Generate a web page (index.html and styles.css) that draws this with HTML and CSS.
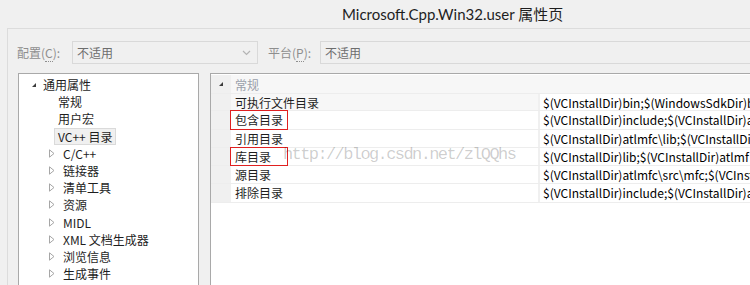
FILE: index.html
```html
<!DOCTYPE html>
<html lang="zh-CN">
<head>
    <meta charset="UTF-8">
    <title>Microsoft.Cpp.Win32.user 属性页</title>
    <link rel="stylesheet" href="styles.css">
</head>
<body>
    <div class="title">Microsoft.Cpp.Win32.user 属性页</div>

    <div class="dialog">
        <div class="config-row">
            <span class="config-label">配置(<u>C</u>):</span>
            <div class="combo combo-config">
                <span>不适用</span>
                <svg class="chevron" width="9" height="6" viewBox="0 0 9 6"><path d="M1 1 L4.5 4.5 L8 1" fill="none" stroke="#b4b4b4" stroke-width="1.2"/></svg>
            </div>
            <span class="config-label">平台(<u>P</u>):</span>
            <div class="combo combo-platform"><span>不适用</span></div>
        </div>

        <div class="panels">
            <div class="tree">
                <div class="tree-row">
                    <svg class="arrow-open" width="6" height="6" viewBox="0 0 6 6"><path d="M5 1 L5 5 L1 5 Z" fill="#3c3c3c"/></svg>
                    <span>通用属性</span>
                </div>
                <div class="tree-row child"><span>常规</span></div>
                <div class="tree-row child"><span>用户宏</span></div>
                <div class="tree-row child"><span class="selected">VC++ 目录</span></div>
                <div class="tree-row folded"><svg class="arrow-closed" width="6" height="9" viewBox="0 0 6 9"><path d="M0.5 0.8 L5 4.5 L0.5 8.2 Z" fill="none" stroke="#a6a6a6"/></svg><span>C/C++</span></div>
                <div class="tree-row folded"><svg class="arrow-closed" width="6" height="9" viewBox="0 0 6 9"><path d="M0.5 0.8 L5 4.5 L0.5 8.2 Z" fill="none" stroke="#a6a6a6"/></svg><span>链接器</span></div>
                <div class="tree-row folded"><svg class="arrow-closed" width="6" height="9" viewBox="0 0 6 9"><path d="M0.5 0.8 L5 4.5 L0.5 8.2 Z" fill="none" stroke="#a6a6a6"/></svg><span>清单工具</span></div>
                <div class="tree-row folded"><svg class="arrow-closed" width="6" height="9" viewBox="0 0 6 9"><path d="M0.5 0.8 L5 4.5 L0.5 8.2 Z" fill="none" stroke="#a6a6a6"/></svg><span>资源</span></div>
                <div class="tree-row folded"><svg class="arrow-closed" width="6" height="9" viewBox="0 0 6 9"><path d="M0.5 0.8 L5 4.5 L0.5 8.2 Z" fill="none" stroke="#a6a6a6"/></svg><span>MIDL</span></div>
                <div class="tree-row folded"><svg class="arrow-closed" width="6" height="9" viewBox="0 0 6 9"><path d="M0.5 0.8 L5 4.5 L0.5 8.2 Z" fill="none" stroke="#a6a6a6"/></svg><span>XML 文档生成器</span></div>
                <div class="tree-row folded"><svg class="arrow-closed" width="6" height="9" viewBox="0 0 6 9"><path d="M0.5 0.8 L5 4.5 L0.5 8.2 Z" fill="none" stroke="#a6a6a6"/></svg><span>浏览信息</span></div>
                <div class="tree-row folded"><svg class="arrow-closed" width="6" height="9" viewBox="0 0 6 9"><path d="M0.5 0.8 L5 4.5 L0.5 8.2 Z" fill="none" stroke="#a6a6a6"/></svg><span>生成事件</span></div>
            </div>

            <div class="grid">
                <div class="grid-category">
                    <div class="gutter"><svg width="6" height="6" viewBox="0 0 6 6"><path d="M5 1 L5 5 L1 5 Z" fill="#3c3c3c"/></svg></div>
                    <span class="category-name">常规</span>
                </div>
                <div class="grid-row first">
                    <div class="gutter"></div>
                    <div class="prop-name"><span class="name">可执行文件目录</span></div>
                    <div class="prop-value">$(VCInstallDir)bin;$(WindowsSdkDir)b</div>
                </div>
                <div class="grid-row">
                    <div class="gutter"></div>
                    <div class="prop-name"><span class="name boxed">包含目录</span></div>
                    <div class="prop-value">$(VCInstallDir)include;$(VCInstallDir)a</div>
                </div>
                <div class="grid-row">
                    <div class="gutter"></div>
                    <div class="prop-name"><span class="name">引用目录</span></div>
                    <div class="prop-value">$(VCInstallDir)atlmfc\lib;$(VCInstallDi</div>
                </div>
                <div class="grid-row">
                    <div class="gutter"></div>
                    <div class="prop-name"><span class="name boxed">库目录</span></div>
                    <div class="prop-value">$(VCInstallDir)lib;$(VCInstallDir)atlmf</div>
                </div>
                <div class="grid-row">
                    <div class="gutter"></div>
                    <div class="prop-name"><span class="name">源目录</span></div>
                    <div class="prop-value">$(VCInstallDir)atlmfc\src\mfc;$(VCInst</div>
                </div>
                <div class="grid-row">
                    <div class="gutter"></div>
                    <div class="prop-name"><span class="name">排除目录</span></div>
                    <div class="prop-value">$(VCInstallDir)include;$(VCInstallDir)a</div>
                </div>

                <div class="watermark">http://blog.csdn.net/zlQQhs</div>
            </div>
        </div>
    </div>
</body>
</html>
```

FILE: styles.css
```css
body {
    margin: 0;
    width: 750px;
    height: 285px;
    overflow: hidden;
    background-color: #f0f0f0;
    font-family: "Noto Sans CJK SC", sans-serif;
    font-size: 12px;
    color: #1e1e1e;
}
.title {
    height: 28px;
    line-height: 28px;
    padding-left: 342px;
    font-family: Lato, "Noto Sans CJK SC", sans-serif;
    font-size: 15px;
    white-space: nowrap;
}
.dialog {
    margin-left: 7px;
    border-left: 1px solid #dcdcdc;
    border-top: 1px solid #dcdcdc;
    height: 256px;
    overflow: hidden;
}
.config-row {
    display: flex;
    align-items: center;
    height: 23px;
    margin-top: 12px;
    padding-left: 9px;
    white-space: nowrap;
}
.config-label {
    color: #8e8e8e;
    width: 55px;
}
.config-label u {
    text-decoration: none;
    border-bottom: 1px dotted #8e8e8e;
}
.combo {
    height: 23px;
    box-sizing: border-box;
    border: 1px solid #d9d9d9;
    background-color: #f0f0f0;
    color: #6d6d6d;
    display: flex;
    align-items: center;
    padding-left: 4px;
}
.combo-config {
    width: 186px;
    margin-right: 10px;
    justify-content: space-between;
    padding-right: 6px;
}
.combo-platform {
    flex: 1;
    margin-left: -3px;
    border-right: none;
}
.chevron {
    display: block;
}
.panels {
    display: flex;
    margin-top: 9px;
    padding-left: 10px;
    gap: 11px;
}
.tree {
    flex: none;
    width: 179px;
    height: 240px;
    background-color: #ffffff;
    border: 1px solid #a9a9a9;
    padding-top: 2px;
}
.tree-row {
    height: 17.2px;
    display: flex;
    align-items: center;
    padding-left: 12px;
    white-space: nowrap;
}
.arrow-open {
    margin-right: 6px;
}
.tree-row.child {
    padding-left: 39px;
}
.tree-row.folded {
    padding-left: 30px;
}
.arrow-closed {
    margin-right: 8px;
}
.selected {
    background-color: #f0f0f0;
    border: 1px solid #dadada;
    padding: 0 3px;
    margin-left: -4px;
    line-height: 15px;
}
.grid {
    position: relative;
    flex: 1;
    min-width: 0;
    height: 240px;
    background-color: #ffffff;
    border-left: 1px solid #a9a9a9;
    border-top: 1px solid #a9a9a9;
    padding-top: 1px;
}
.grid-category {
    display: flex;
    align-items: center;
    height: 18px;
    background-color: #f7f7f7;
}
.gutter {
    flex: none;
    width: 20px;
    align-self: stretch;
    background-color: #f0f0f0;
    display: flex;
    align-items: center;
    justify-content: center;
}
.category-name {
    color: #9aa0aa;
    padding-left: 4px;
}
.grid-row {
    display: flex;
    height: 18.25px;
    box-sizing: border-box;
    border-bottom: 1px solid #ededed;
    white-space: nowrap;
}
.grid-row.first {
    border-top: 1px solid #ededed;
}
.grid-row.first .prop-name {
    background-color: #f7f7f7;
}
.prop-name {
    flex: none;
    width: 307px;
    display: flex;
    align-items: stretch;
}
.name {
    display: flex;
    align-items: center;
    padding-left: 4px;
}
.name.boxed {
    border: 1px solid #e02020;
    margin-left: -1px;
    width: 58px;
    box-sizing: border-box;
    margin-top: -1px;
    margin-bottom: -1px;
}
.prop-value {
    flex: 1;
    min-width: 0;
    overflow: hidden;
    border-left: 2px solid #f0f0f0;
    padding-left: 3px;
    display: flex;
    align-items: center;
    color: #000000;
}
.watermark {
    position: absolute;
    left: 72px;
    top: 71px;
    font-family: "Liberation Mono", monospace;
    font-size: 17px;
    letter-spacing: -1.6px;
    color: rgba(0, 0, 0, 0.2);
    white-space: nowrap;
}
```
